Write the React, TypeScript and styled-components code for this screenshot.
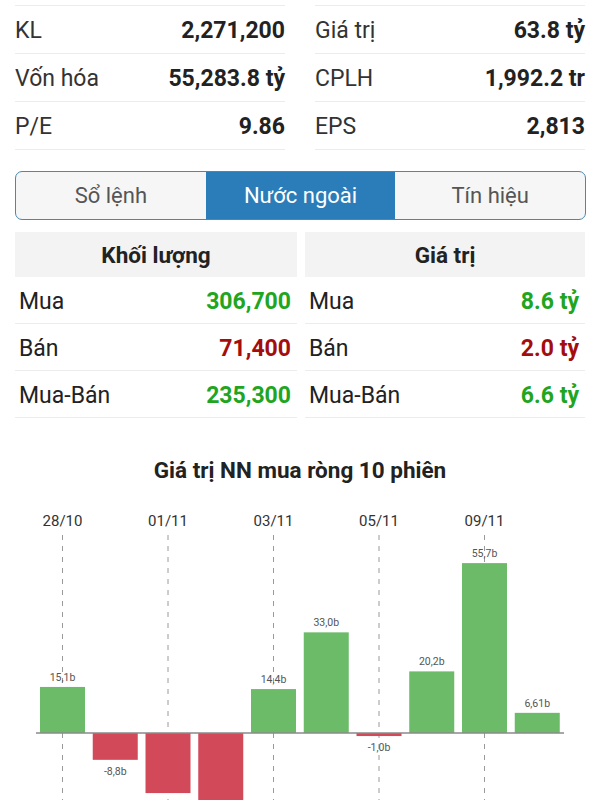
import { createGlobalStyle, styled } from "styled-components"

type Stat = { label: string; value: string }
type Flow = { label: string; value: string; tone: "up" | "down" }
type Session = { date: string; value: number; text: string; showDate: boolean }

const GlobalStyle = createGlobalStyle`
  * {
    box-sizing: border-box;
  }
  body {
    margin: 0;
    background: #fff;
    font-family: Roboto, "Noto Sans", sans-serif;
    color: #222;
  }
`

const Page = styled.div`
  width: 600px;
  height: 800px;
  overflow: hidden;
`

const StatsGrid = styled.section`
  display: grid;
  grid-template-columns: 1fr 1fr;
  column-gap: 30px;
  padding: 5px 15px 0;
`

const StatColumn = styled.div`
  display: flex;
  flex-direction: column;
  border-top: 1px solid #ececec;
`

const StatRow = styled.div`
  display: flex;
  justify-content: space-between;
  align-items: center;
  height: 48px;
  padding-top: 2px;
  border-bottom: 1px solid #ececec;
  font-size: 23px;
`

const StatLabel = styled.span`
  color: #333;
`

const StatValue = styled.span`
  font-weight: 700;
  color: #222;
`

const Tabs = styled.div`
  display: flex;
  margin: 21px 14px 0 15px;
  height: 49px;
  border: 1.5px solid #4d87ab;
  border-radius: 7px;
  overflow: hidden;
  background: #f6f6f6;
`

const Tab = styled.div<{ $active?: boolean }>`
  flex: 1;
  display: flex;
  align-items: center;
  justify-content: center;
  font-size: 22px;
  color: ${(p) => (p.$active ? "#fff" : "#555")};
  background: ${(p) => (p.$active ? "#2a7db9" : "transparent")};
`

const FlowGrid = styled.section`
  display: grid;
  grid-template-columns: 282px 280px;
  column-gap: 8px;
  padding: 12px 15px 0;
`

const FlowColumn = styled.div`
  display: flex;
  flex-direction: column;
`

const FlowHeader = styled.div`
  height: 45px;
  display: flex;
  align-items: center;
  justify-content: center;
  background: #f3f3f3;
  font-size: 22.5px;
  font-weight: 700;
  color: #222;
`

const FlowRow = styled.div`
  display: flex;
  justify-content: space-between;
  align-items: center;
  height: 47px;
  padding: 3px 6px 0 4px;
  border-bottom: 1px solid #ececec;
  font-size: 23px;
`

const FlowLabel = styled.span`
  color: #222;
`

const FlowValue = styled.span<{ $tone: "up" | "down" }>`
  font-weight: 700;
  color: ${(p) => (p.$tone === "up" ? "#21a521" : "#a40d0d")};
`

const ChartTitle = styled.h2`
  margin: 39px 0 0;
  text-align: center;
  font-size: 22.5px;
  line-height: 26px;
  font-weight: 700;
  color: #222;
`

const ChartSvg = styled.svg`
  display: block;
  margin-top: 7px;
`

const leftStats: Stat[] = [
  { label: "KL", value: "2,271,200" },
  { label: "Vốn hóa", value: "55,283.8 tỷ" },
  { label: "P/E", value: "9.86" },
]

const rightStats: Stat[] = [
  { label: "Giá trị", value: "63.8 tỷ" },
  { label: "CPLH", value: "1,992.2 tr" },
  { label: "EPS", value: "2,813" },
]

const volumeFlows: Flow[] = [
  { label: "Mua", value: "306,700", tone: "up" },
  { label: "Bán", value: "71,400", tone: "down" },
  { label: "Mua-Bán", value: "235,300", tone: "up" },
]

const valueFlows: Flow[] = [
  { label: "Mua", value: "8.6 tỷ", tone: "up" },
  { label: "Bán", value: "2.0 tỷ", tone: "down" },
  { label: "Mua-Bán", value: "6.6 tỷ", tone: "up" },
]

const sessions: Session[] = [
  { date: "28/10", value: 15.1, text: "15,1b", showDate: true },
  { date: "31/10", value: -8.8, text: "-8,8b", showDate: false },
  { date: "01/11", value: -19.7, text: "-19,7b", showDate: true },
  { date: "02/11", value: -26.4, text: "-26,4b", showDate: false },
  { date: "03/11", value: 14.4, text: "14,4b", showDate: true },
  { date: "04/11", value: 33.0, text: "33,0b", showDate: false },
  { date: "05/11", value: -1.0, text: "-1,0b", showDate: true },
  { date: "08/11", value: 20.2, text: "20,2b", showDate: false },
  { date: "09/11", value: 55.7, text: "55,7b", showDate: true },
  { date: "10/11", value: 6.61, text: "6,61b", showDate: false },
]

function NetChart() {
  const zeroY = 243
  const scale = 3.05
  const step = 52.75
  const barW = 45
  const startX = 40
  const height = 310

  return (
    <ChartSvg width={600} height={height} viewBox={`0 0 600 ${height}`}>
      {sessions.map((s, i) => {
        const cx = startX + i * step + barW / 2
        return s.showDate ? (
          <g key={"d" + s.date}>
            <text
              x={cx}
              y={36}
              textAnchor="middle"
              fontSize={15}
              fill="#333"
              fontFamily="Roboto, sans-serif"
            >
              {s.date}
            </text>
            <line x1={cx} y1={45} x2={cx} y2={height} stroke="#9a9a9a" strokeWidth={1} strokeDasharray="5 6" />
          </g>
        ) : null
      })}
      {sessions.map((s, i) => {
        const x = startX + i * step
        const h = Math.abs(s.value) * scale
        const up = s.value >= 0
        const y = up ? zeroY - h : zeroY
        const labelY = up ? y - 6 : zeroY + h + 15
        return (
          <g key={s.date}>
            <rect x={x} y={y} width={barW} height={h} fill={up ? "#6cbb69" : "#d24a5a"} />
            {labelY < height && (
              <text
                x={x + barW / 2}
                y={labelY}
                textAnchor="middle"
                fontSize={10.5}
                fill="#555"
                fontFamily="Roboto, sans-serif"
              >
                {s.text}
              </text>
            )}
          </g>
        )
      })}
      <line x1={36} y1={zeroY} x2={564} y2={zeroY} stroke="#8a8a8a" strokeWidth={1.5} />
    </ChartSvg>
  )
}

export default function App() {
  return (
    <>
      <GlobalStyle />
      <Page>
        <StatsGrid>
          {[leftStats, rightStats].map((col, ci) => (
            <StatColumn key={ci}>
              {col.map((s) => (
                <StatRow key={s.label}>
                  <StatLabel>{s.label}</StatLabel>
                  <StatValue>{s.value}</StatValue>
                </StatRow>
              ))}
            </StatColumn>
          ))}
        </StatsGrid>

        <Tabs>
          <Tab>Sổ lệnh</Tab>
          <Tab $active>Nước ngoài</Tab>
          <Tab>Tín hiệu</Tab>
        </Tabs>

        <FlowGrid>
          {[
            { title: "Khối lượng", rows: volumeFlows },
            { title: "Giá trị", rows: valueFlows },
          ].map((col) => (
            <FlowColumn key={col.title}>
              <FlowHeader>{col.title}</FlowHeader>
              {col.rows.map((r) => (
                <FlowRow key={r.label}>
                  <FlowLabel>{r.label}</FlowLabel>
                  <FlowValue $tone={r.tone}>{r.value}</FlowValue>
                </FlowRow>
              ))}
            </FlowColumn>
          ))}
        </FlowGrid>

        <ChartTitle>Giá trị NN mua ròng 10 phiên</ChartTitle>
        <NetChart />
      </Page>
    </>
  )
}
